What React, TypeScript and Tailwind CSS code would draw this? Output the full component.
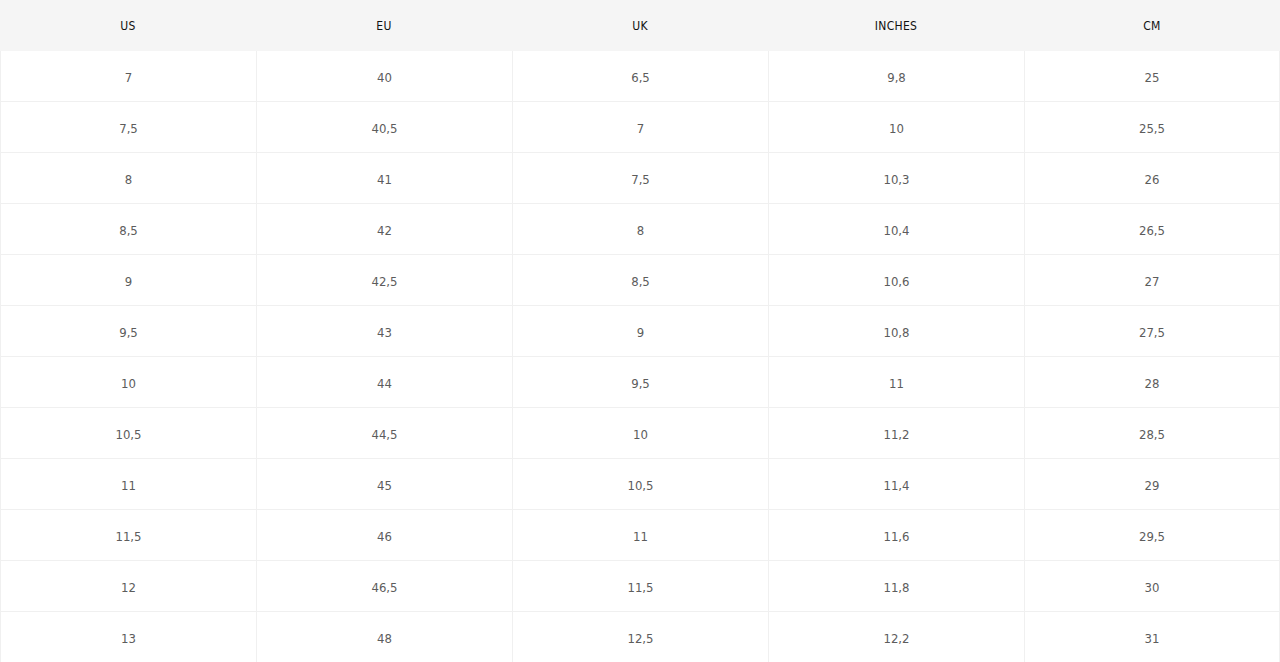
import React from "react";

const headers = ["US", "EU", "UK", "INCHES", "CM"];
const rows: string[][] = [
  ["7", "40", "6,5", "9,8", "25"],
  ["7,5", "40,5", "7", "10", "25,5"],
  ["8", "41", "7,5", "10,3", "26"],
  ["8,5", "42", "8", "10,4", "26,5"],
  ["9", "42,5", "8,5", "10,6", "27"],
  ["9,5", "43", "9", "10,8", "27,5"],
  ["10", "44", "9,5", "11", "28"],
  ["10,5", "44,5", "10", "11,2", "28,5"],
  ["11", "45", "10,5", "11,4", "29"],
  ["11,5", "46", "11", "11,6", "29,5"],
  ["12", "46,5", "11,5", "11,8", "30"],
  ["13", "48", "12,5", "12,2", "31"],
];

export default function App() {
  return (
    <div
      className="w-[1280px] bg-white"
      style={{ fontFamily: '"DejaVu Sans Condensed", "Liberation Sans", sans-serif' }}
    >
      <div className="grid grid-cols-5 h-[51px] bg-[#f5f5f5]">
        {headers.map((h) => (
          <div
            key={h}
            className="flex items-center justify-center text-[12px] font-normal text-[#111111] tracking-[0.3px]"
          >
            {h}
          </div>
        ))}
      </div>
      {rows.map((r, i) => (
        <div key={i} className="grid grid-cols-5 border-b border-[#f0f0f0]">
          {r.map((c, j) => (
            <div
              key={j}
              className={`flex h-[50px] items-center justify-center border-l border-[#f0f0f0] pt-[3px] text-[13px] text-[#5c5c5c] ${
                j === 4 ? "border-r" : ""
              }`}
            >
              {c}
            </div>
          ))}
        </div>
      ))}
    </div>
  );
}
